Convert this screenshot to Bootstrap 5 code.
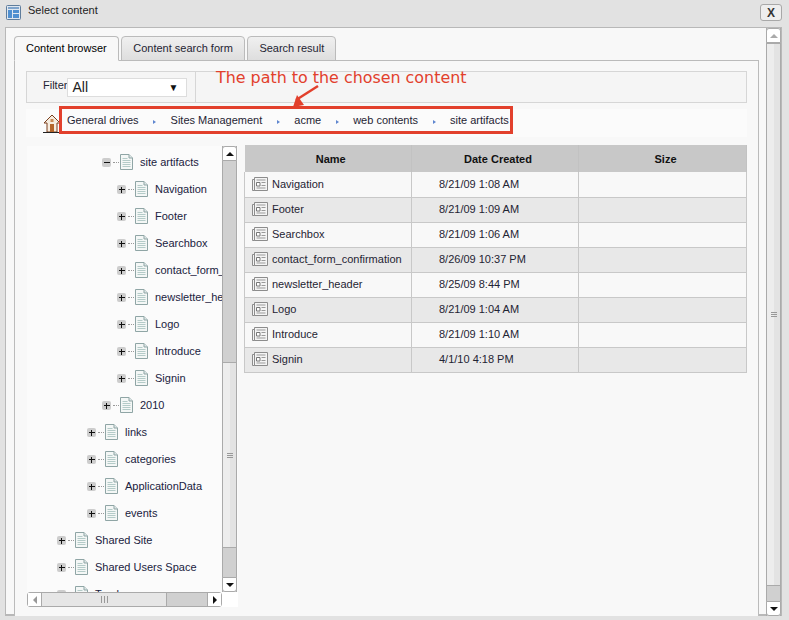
<!DOCTYPE html>
<html lang="en">
<head>
  <meta charset="UTF-8" />
  <meta name="viewport" content="width=device-width, initial-scale=1" />
  <title>Select content</title>
  <link href="https://cdn.jsdelivr.net/npm/bootstrap@5.3.3/dist/css/bootstrap.min.css" rel="stylesheet" />
  <style>
    body {
      background: #e2e2e2;
      color: #1f2433;
      font: 11px/14px "Liberation Sans", Arial, sans-serif;
      height: 620px;
      overflow: hidden;
    }
    .win-title { height: 27px; padding: 3px 7px 0 6px; font-size: 11px; color: #222; }
    .win-icon { margin: 2px 7px 0 0; flex: none; }
    .win-close {
      width: 22px; height: 17px; margin-top: 1px; background: #eee; border: 1px solid #a8a8a8;
      border-radius: 3px; font: bold 12px/14px "Liberation Sans", sans-serif; text-align: center; padding: 0; color: #333;
    }
    .win-body {
      height: 589px; margin: 0 7px 0 5px; background: #f8f8f8;
      border: 1px solid #b8b8b8; border-bottom-width: 2px;
    }
    .win-main { width: 761px; padding: 8px 0 0 8px; position: relative; }

    .tab-row { height: 25px; gap: 2.5px; border: 0; }
    .tab-row .nav-link {
      height: 25px; padding: 4px 11px; font-size: 11px; line-height: 14px; color: #1f2433;
      background: linear-gradient(#f0f0f0, #dedede); border: 1px solid #bbb; border-radius: 4px 4px 0 0; margin: 0;
    }
    .tab-row .nav-link.active { background: #f8f8f8; border-color: #bbb #bbb #f8f8f8; height: 25px; }
    .tab-pane-box {
      width: 745px; height: 556px; margin-top: -1px; padding: 10px 11px 0;
      border: 1px solid #bbb; border-bottom: 0; background: #f8f8f8;
    }

    .filter-bar { height: 32px; background: #f5f5f5; border: 1px solid #d6d6d6; }
    .filter-left { width: 169px; height: 100%; padding: 6px 0 0 16px; border-right: 1px solid #d6d6d6; }
    .filter-label { font-size: 11px; line-height: 14px; }
    .filter-select {
      width: 120px; height: 19px; background: #fff; border: 1px solid #ddd;
      font-size: 14px; line-height: 17px; padding-left: 4px; color: #222;
    }
    .filter-caret { font-size: 10px; margin-right: 8px; color: #111; }

    .path-bar { height: 28px; margin-top: 6px; background: #fbfbfb; padding-left: 17px; }
    .home-icon { flex: none; margin-right: -2px; }
    .path-box {
      height: 28px; margin: -6px 0 0 0; padding: 0 1px 0 5px; gap: 14.5px;
      border: 3px solid #e2402c; background: #fbfbfb;
    }
    .path-sep { width: 0; height: 0; margin-top: 3px; border-left: 3px solid #5f86cf; border-top: 2.5px solid transparent; border-bottom: 2.5px solid transparent; }

    .note-text {
      position: absolute; left: 210px; top: 41px; color: #e2402c;
      font: 15.9px/18px "DejaVu Sans", sans-serif; white-space: nowrap;
    }
    .note-arrow { position: absolute; left: 280px; top: 56px; }

    .content-row { margin-top: 9px; gap: 6px; }
    .tree-box { width: 211px; height: 461px; margin-left: 1px; background: #fbfbfb; flex: none; }
    .tree-view { width: 195px; height: 446px; overflow: hidden; padding-top: 2px; flex: none; }
    .tree-item { height: 27px; white-space: nowrap; color: #1a2240; }
    .tree-item svg { flex: none; }
    .lvl-1 { padding-left: 30px; }
    .lvl-2 { padding-left: 60px; }
    .lvl-3 { padding-left: 75px; }
    .lvl-4 { padding-left: 90px; }
    .tree-toggle {
      width: 9px; height: 9px; flex: none; background: #cdcdcd; border-radius: 2px;
      position: relative; margin-top: 2px;
    }
    .tree-toggle::before { content: ""; position: absolute; left: 1.5px; top: 4px; width: 6px; height: 1px; background: #111; }
    .tree-toggle.plus::after { content: ""; position: absolute; left: 4px; top: 1.5px; width: 1px; height: 6px; background: #111; }
    .tree-dots { width: 6px; flex: none; margin: 2px 1px 0 2px; border-top: 1px dotted #999; }
    .tree-label { margin-left: 7px; flex: none; }

    .sb-v { width: 15px; background: #d0d0d0; border: 1px solid #aaa; border-width: 0 1px; flex: none; }
    .sb-btn { height: 15px; background: #fff; border: 1px solid #aaa; border-radius: 3px 3px 0 0; margin: 0 -1px; flex: none; }
    .sb-btn.bottom { border-radius: 0 0 3px 3px; }
    .sb-up { width: 0; height: 0; border: 4px solid transparent; border-top: 0; border-bottom: 4px solid #111; }
    .sb-down { width: 0; height: 0; border: 4px solid transparent; border-bottom: 0; border-top: 4px solid #111; }
    .sb-up.dim { border-bottom-color: #aaa; }
    .sb-thumb { flex: none; background: linear-gradient(90deg, #ededed 55%, #e3e3e3 55%); border-bottom: 1px solid #aaa; border-top: 1px solid #aaa; }
    .grip-v { width: 6px; height: 5px; border-top: 1px solid #999; border-bottom: 1px solid #999; position: relative; }
    .grip-v::after { content: ""; position: absolute; left: 0; right: 0; top: 1px; border-top: 1px solid #999; }
    .sb-spacer { flex: none; }
    .tree-sb-top { height: 201px; }
    .tree-sb-thumb { height: 186px; }
    .tree-sb-bottom { height: 29px; }

    .sb-h { width: 195px; height: 15px; background: #d0d0d0; border: 1px solid #aaa; border-radius: 3px; flex: none; }
    .sb-h-btn { width: 14px; background: #fff; flex: none; border-right: 1px solid #aaa; }
    .sb-h-btn.end { border-right: 0; border-left: 1px solid #aaa; }
    .sb-left { width: 0; height: 0; border: 4px solid transparent; border-left: 0; border-right: 4px solid #999; }
    .sb-right { width: 0; height: 0; border: 4px solid transparent; border-right: 0; border-left: 4px solid #111; }
    .sb-h-thumb { width: 125px; background: #e6e6e6; border-right: 1px solid #aaa; flex: none; }
    .grip-h { width: 7px; height: 7px; border-left: 1px solid #999; border-right: 1px solid #999; position: relative; }
    .grip-h::after { content: ""; position: absolute; top: 0; bottom: 0; left: 2px; border-left: 1px solid #999; }
    .tree-corner { width: 16px; background: #fff; }

    .list-table { width: 503px; height: 228px; font-size: 11px; line-height: 14px; margin: -1px 0 0; table-layout: fixed; flex: none; }
    .list-table > thead > tr > th {
      height: 27px; padding: 0 0 0 6px; background: #c8c8c8; text-align: center; border: 0;
      border-right: 1px solid #c2c2c2; color: #111; vertical-align: middle;
    }
    .list-table > tbody > tr > td {
      height: 25px; padding: 0 0 1px 27px; background: #f8f8f8; color: #1f2433; vertical-align: middle;
      border: 0; border-bottom: 1px solid #c8c8c8; border-right: 1px solid #c8c8c8;
    }
    .list-table > tbody > tr:nth-child(even) > td { background: #e8e8e8; }
    .list-table > tbody > tr > td.name-cell { padding-left: 7px; border-left: 1px solid #c8c8c8; }
    .main-sb { width: 15px; height: 588px; }
    .main-sb-thumb { height: 543px; }
    .main-sb-space { height: 15px; }
  </style>
</head>
<body>

  <svg width="0" height="0" class="position-absolute">
    <symbol id="doc" viewBox="0 0 13 16">
      <path d="M.5.5h8.500l3.500 3.500v11.500h-12z" fill="#f4f7f6" stroke="#8fa5a5" />
      <path d="M9 .5v3.500h3.500" fill="#dfe8e8" stroke="#8fa5a5" />
      <path d="M2.500 4.500h5M2.500 6.500h8M2.500 8.500h8M2.500 10.500h8M2.500 12.500h8" stroke="#b4cbc8" />
    </symbol>
    <symbol id="art" viewBox="0 0 16 14">
      <path d="M.5 2.500h2v11h-2zM2.500.5h13v13h-13z" fill="#f4f4f4" stroke="#8c8c8c" />
      <path d="M4.500 3h9" stroke="#999" />
      <path d="M4.500 5.500h3.500v3.500h-3.500z" fill="#fff" stroke="#777" />
      <path d="M9.500 5.500h4M9.500 8.500h4M4.500 11h9" stroke="#999" />
    </symbol>
  </svg>

  <div class="win-title d-flex align-items-start">
    <svg class="win-icon" width="15" height="15" viewBox="0 0 15 15">
      <rect x=".5" y=".5" width="14" height="14" rx="1" fill="#dfe7f0" stroke="#5f7d9c" />
      <rect x="2" y="2" width="11" height="2" fill="#7fa4cc" />
      <rect x="2" y="5" width="4" height="8" fill="#4f8fd0" />
      <rect x="7" y="5" width="6" height="3" fill="#4f8fd0" />
      <rect x="7" y="9" width="6" height="4" fill="#4f8fd0" />
    </svg>
    <span class="flex-grow-1">Select content</span>
    <button class="win-close" type="button">X</button>
  </div>

  <div class="win-body d-flex">
    <div class="win-main">
      <ul class="nav nav-tabs tab-row">
        <li class="nav-item"><a class="nav-link active" href="#">Content browser</a></li>
        <li class="nav-item"><a class="nav-link" href="#">Content search form</a></li>
        <li class="nav-item"><a class="nav-link" href="#">Search result</a></li>
      </ul>

      <div class="tab-pane-box">
        <div class="filter-bar d-flex">
          <div class="filter-left d-flex">
            <span class="filter-label">Filter</span>
            <div class="filter-select d-flex justify-content-between align-items-center">
              <span>All</span><span class="filter-caret">&#9660;</span>
            </div>
          </div>
        </div>

        <div class="path-bar d-flex align-items-center">
          <svg class="home-icon" width="18" height="19" viewBox="0 0 18 19">
            <path d="M9 1 1 9h3v9h10V9h3z" fill="#f6ecdf" stroke="#7a3f1d" stroke-linejoin="round" />
            <path d="M0 18.500h18" stroke="#222" />
            <rect x="7" y="10" width="4" height="8" fill="#b4652a" />
            <rect x="7.500" y="5" width="3" height="3" fill="#c98a55" />
          </svg>
          <div class="path-box d-flex align-items-center">
            <span>General drives</span><i class="path-sep"></i>
            <span>Sites Management</span><i class="path-sep"></i>
            <span>acme</span><i class="path-sep"></i>
            <span>web contents</span><i class="path-sep"></i>
            <span>site artifacts</span>
          </div>
        </div>

        <div class="content-row d-flex align-items-start">
          <div class="tree-box">
            <div class="d-flex">
              <div class="tree-view">
                <div class="tree-item lvl-3 d-flex align-items-center"><span class="tree-toggle"></span><span class="tree-dots"></span><svg width="13" height="16"><use href="#doc" /></svg><span class="tree-label">site artifacts</span></div>
                <div class="tree-item lvl-4 d-flex align-items-center"><span class="tree-toggle plus"></span><span class="tree-dots"></span><svg width="13" height="16"><use href="#doc" /></svg><span class="tree-label">Navigation</span></div>
                <div class="tree-item lvl-4 d-flex align-items-center"><span class="tree-toggle plus"></span><span class="tree-dots"></span><svg width="13" height="16"><use href="#doc" /></svg><span class="tree-label">Footer</span></div>
                <div class="tree-item lvl-4 d-flex align-items-center"><span class="tree-toggle plus"></span><span class="tree-dots"></span><svg width="13" height="16"><use href="#doc" /></svg><span class="tree-label">Searchbox</span></div>
                <div class="tree-item lvl-4 d-flex align-items-center"><span class="tree-toggle plus"></span><span class="tree-dots"></span><svg width="13" height="16"><use href="#doc" /></svg><span class="tree-label">contact_form_confirmation</span></div>
                <div class="tree-item lvl-4 d-flex align-items-center"><span class="tree-toggle plus"></span><span class="tree-dots"></span><svg width="13" height="16"><use href="#doc" /></svg><span class="tree-label">newsletter_header</span></div>
                <div class="tree-item lvl-4 d-flex align-items-center"><span class="tree-toggle plus"></span><span class="tree-dots"></span><svg width="13" height="16"><use href="#doc" /></svg><span class="tree-label">Logo</span></div>
                <div class="tree-item lvl-4 d-flex align-items-center"><span class="tree-toggle plus"></span><span class="tree-dots"></span><svg width="13" height="16"><use href="#doc" /></svg><span class="tree-label">Introduce</span></div>
                <div class="tree-item lvl-4 d-flex align-items-center"><span class="tree-toggle plus"></span><span class="tree-dots"></span><svg width="13" height="16"><use href="#doc" /></svg><span class="tree-label">Signin</span></div>
                <div class="tree-item lvl-3 d-flex align-items-center"><span class="tree-toggle plus"></span><span class="tree-dots"></span><svg width="13" height="16"><use href="#doc" /></svg><span class="tree-label">2010</span></div>
                <div class="tree-item lvl-2 d-flex align-items-center"><span class="tree-toggle plus"></span><span class="tree-dots"></span><svg width="13" height="16"><use href="#doc" /></svg><span class="tree-label">links</span></div>
                <div class="tree-item lvl-2 d-flex align-items-center"><span class="tree-toggle plus"></span><span class="tree-dots"></span><svg width="13" height="16"><use href="#doc" /></svg><span class="tree-label">categories</span></div>
                <div class="tree-item lvl-2 d-flex align-items-center"><span class="tree-toggle plus"></span><span class="tree-dots"></span><svg width="13" height="16"><use href="#doc" /></svg><span class="tree-label">ApplicationData</span></div>
                <div class="tree-item lvl-2 d-flex align-items-center"><span class="tree-toggle plus"></span><span class="tree-dots"></span><svg width="13" height="16"><use href="#doc" /></svg><span class="tree-label">events</span></div>
                <div class="tree-item lvl-1 d-flex align-items-center"><span class="tree-toggle plus"></span><span class="tree-dots"></span><svg width="13" height="16"><use href="#doc" /></svg><span class="tree-label">Shared Site</span></div>
                <div class="tree-item lvl-1 d-flex align-items-center"><span class="tree-toggle plus"></span><span class="tree-dots"></span><svg width="13" height="16"><use href="#doc" /></svg><span class="tree-label">Shared Users Space</span></div>
                <div class="tree-item lvl-1 d-flex align-items-center"><span class="tree-toggle plus"></span><span class="tree-dots"></span><svg width="13" height="16"><use href="#doc" /></svg><span class="tree-label">Trash</span></div>
              </div>
              <div class="sb-v d-flex flex-column">
                <div class="sb-btn d-flex align-items-center justify-content-center"><i class="sb-up"></i></div>
                <div class="sb-spacer tree-sb-top"></div>
                <div class="sb-thumb tree-sb-thumb d-flex align-items-center justify-content-center"><i class="grip-v"></i></div>
                <div class="sb-spacer tree-sb-bottom"></div>
                <div class="sb-btn bottom d-flex align-items-center justify-content-center"><i class="sb-down"></i></div>
              </div>
            </div>
            <div class="d-flex">
              <div class="sb-h d-flex">
                <div class="sb-h-btn d-flex align-items-center justify-content-center"><i class="sb-left"></i></div>
                <div class="sb-h-thumb d-flex align-items-center justify-content-center"><i class="grip-h"></i></div>
                <div class="flex-grow-1"></div>
                <div class="sb-h-btn end d-flex align-items-center justify-content-center"><i class="sb-right"></i></div>
              </div>
              <div class="tree-corner"></div>
            </div>
          </div>

          <table class="table list-table">
            <colgroup><col style="width:167px" /><col style="width:167px" /><col /></colgroup>
            <thead>
              <tr><th>Name</th><th>Date Created</th><th>Size</th></tr>
            </thead>
            <tbody>
              <tr><td class="name-cell"><div class="d-flex align-items-center gap-1"><svg width="16" height="14"><use href="#art" /></svg>Navigation</div></td><td>8/21/09 1:08 AM</td><td></td></tr>
              <tr><td class="name-cell"><div class="d-flex align-items-center gap-1"><svg width="16" height="14"><use href="#art" /></svg>Footer</div></td><td>8/21/09 1:09 AM</td><td></td></tr>
              <tr><td class="name-cell"><div class="d-flex align-items-center gap-1"><svg width="16" height="14"><use href="#art" /></svg>Searchbox</div></td><td>8/21/09 1:06 AM</td><td></td></tr>
              <tr><td class="name-cell"><div class="d-flex align-items-center gap-1"><svg width="16" height="14"><use href="#art" /></svg>contact_form_confirmation</div></td><td>8/26/09 10:37 PM</td><td></td></tr>
              <tr><td class="name-cell"><div class="d-flex align-items-center gap-1"><svg width="16" height="14"><use href="#art" /></svg>newsletter_header</div></td><td>8/25/09 8:44 PM</td><td></td></tr>
              <tr><td class="name-cell"><div class="d-flex align-items-center gap-1"><svg width="16" height="14"><use href="#art" /></svg>Logo</div></td><td>8/21/09 1:04 AM</td><td></td></tr>
              <tr><td class="name-cell"><div class="d-flex align-items-center gap-1"><svg width="16" height="14"><use href="#art" /></svg>Introduce</div></td><td>8/21/09 1:10 AM</td><td></td></tr>
              <tr><td class="name-cell"><div class="d-flex align-items-center gap-1"><svg width="16" height="14"><use href="#art" /></svg>Signin</div></td><td>4/1/10 4:18 PM</td><td></td></tr>
            </tbody>
          </table>
        </div>
      </div>

      <span class="note-text">The path to the chosen content</span>
      <svg class="note-arrow" width="36" height="24" viewBox="0 0 36 24">
        <path d="M32 2 10 16" stroke="#e2402c" stroke-width="2.500" fill="none" />
        <path d="M7 23 18 21 11 11z" fill="#e2402c" />
      </svg>
    </div>

    <div class="main-sb sb-v d-flex flex-column">
      <div class="sb-btn d-flex align-items-center justify-content-center"><i class="sb-up dim"></i></div>
      <div class="sb-thumb main-sb-thumb d-flex align-items-center justify-content-center"><i class="grip-v"></i></div>
      <div class="sb-spacer main-sb-space"></div>
      <div class="sb-btn bottom d-flex align-items-center justify-content-center"><i class="sb-down"></i></div>
    </div>
  </div>

  <script src="https://cdn.jsdelivr.net/npm/bootstrap@5.3.3/dist/js/bootstrap.bundle.min.js"></script>
</body>
</html>
